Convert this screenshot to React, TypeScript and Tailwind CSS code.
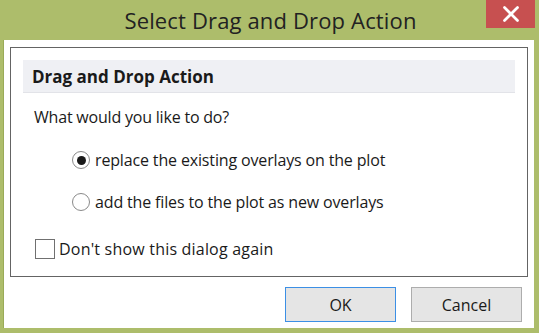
import { X } from "lucide-react";

const font = { fontFamily: '"Open Sans", "Noto Sans", sans-serif' };

function Radio({ checked, label }: { checked?: boolean; label: string }) {
  return (
    <label className="flex items-center gap-[5px] pl-[61px]">
      <span className="flex h-[18px] w-[18px] items-center justify-center rounded-full border border-[#8a8a8a] bg-white">
        {checked && <span className="h-[9px] w-[9px] rounded-full bg-[#1a1a1a]" />}
      </span>
      <span className="text-[16px] leading-none tracking-[-0.15px] text-[#1a1a1a]">{label}</span>
    </label>
  );
}

export default function App() {
  return (
    <div
      className="flex h-[333px] w-[539px] flex-col bg-[#adbd6b]"
      style={font}
    >
      {/* Title bar */}
      <div className="relative flex h-[40px] shrink-0 items-center justify-center">
        <span className="pl-[2px] text-[22px] tracking-[0.15px] text-[#222]">Select Drag and Drop Action</span>
        <button className="absolute right-[4px] top-0 flex h-[28px] w-[49px] items-center justify-center bg-[#c75050]">
          <X className="h-[26px] w-[26px] text-white" strokeWidth={2.5} />
        </button>
      </div>

      {/* Client area */}
      <div className="ml-[3px] mr-[5px] mb-[5px] flex flex-1 flex-col border-l border-[#9aab58] bg-white">
        <div className="ml-[6px] mr-[6px] mt-[7px] flex h-[230px] flex-col border border-[#646464]">
          <div className="mx-[12px] mt-[12px] flex h-[33px] items-center border-b border-[#e2e3e8] bg-[#eff0f4] pl-[9px]">
            <span className="text-[17px] font-bold leading-none text-[#1a1a1a]">Drag and Drop Action</span>
          </div>
          <div className="mt-[16px] pl-[23px] text-[16px] leading-none tracking-[-0.2px] text-[#1a1a1a]">
            What would you like to do?
          </div>
          <div className="mt-[26px] flex flex-col gap-[24px]">
            <Radio checked label="replace the existing overlays on the plot" />
            <Radio label="add the files to the plot as new overlays" />
          </div>
          <label className="mt-[28px] flex items-center gap-[4px] pl-[24px]">
            <span className="h-[20px] w-[20px] border border-[#707070] bg-white" />
            <span className="text-[16px] leading-none tracking-[0.2px] text-[#1a1a1a]">Don't show this dialog again</span>
          </label>
        </div>

        <div className="mt-[10px] flex justify-end gap-[15px] pr-[12px]">
          <button className="h-[35px] w-[111px] border border-[#3c8fe5] bg-[#e5e5e5] text-[16px] text-[#1a1a1a]">
            OK
          </button>
          <button className="h-[35px] w-[111px] border border-[#adadad] bg-[#e5e5e5] text-[16px] text-[#1a1a1a]">
            Cancel
          </button>
        </div>
      </div>
    </div>
  );
}
